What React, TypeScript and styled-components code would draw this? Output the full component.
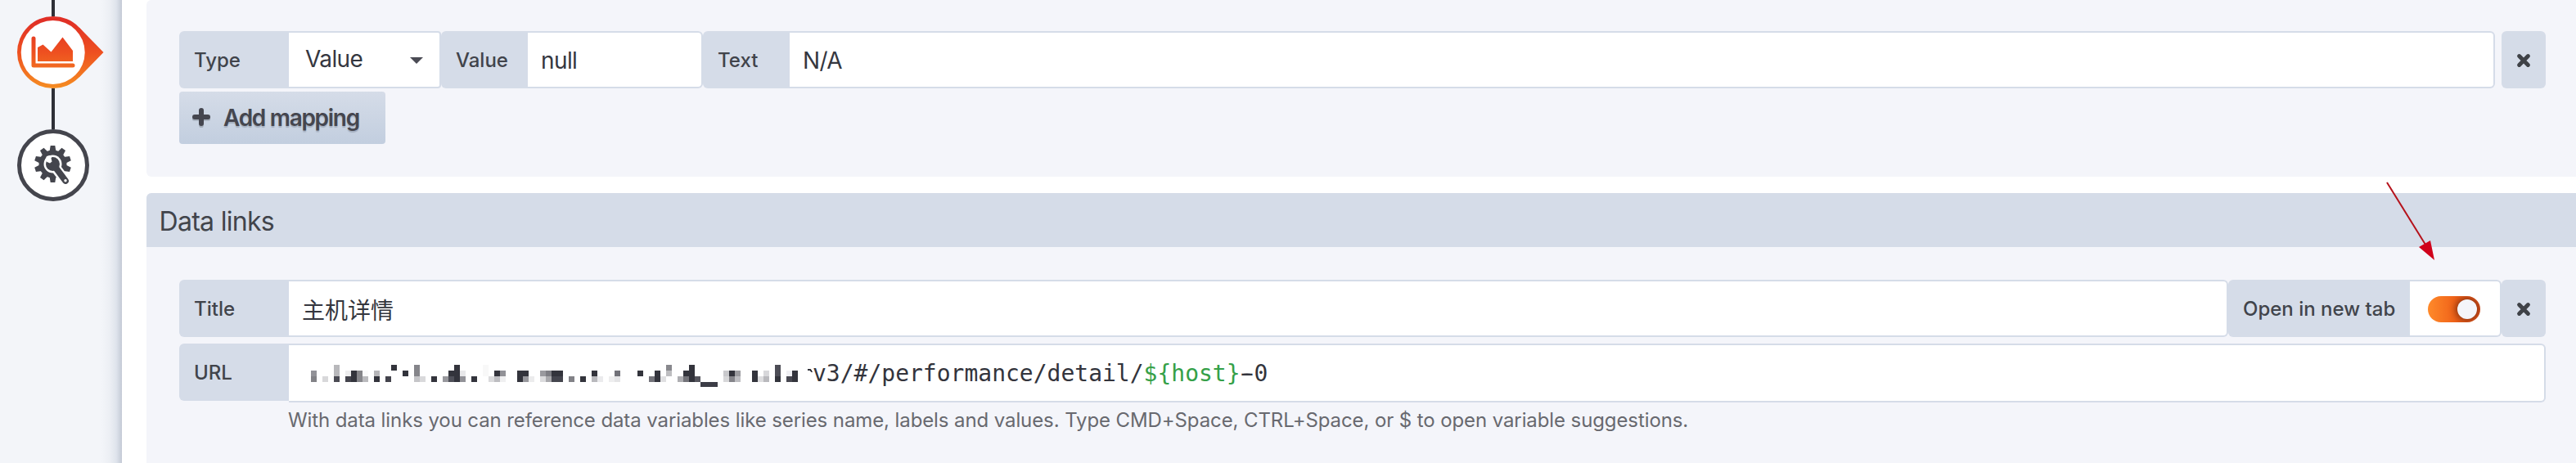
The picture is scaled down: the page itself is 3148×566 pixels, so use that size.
import React from 'react';
import styled, { createGlobalStyle } from 'styled-components';

const GlobalStyle = createGlobalStyle`
  * { box-sizing: border-box; }
  body {
    margin: 0;
    overflow: hidden;
    background: #fff;
    color: #35373f;
    font-family: Inter, "Noto Sans CJK SC", sans-serif;
    font-size: 28px;
    letter-spacing: -0.6px;
  }
`;

const Page = styled.div`
  display: flex;
  width: 3148px;
  height: 566px;
  overflow: hidden;
  position: relative;
`;

const Sidebar = styled.aside`
  flex: 0 0 149px;
  display: flex;
  flex-direction: column;
  padding-left: 21px;
  background: linear-gradient(90deg, #f3f5f9 0, #f3f5f9 124px, #eceff4 134px, #dfe4ec 142px, #c4cad6 149px);
`;

const Connector = styled.div<{ $height: number }>`
  width: 4px;
  height: ${(p) => p.$height}px;
  margin-left: 42px;
  background: #2f3037;
`;

const StepIcon = styled.svg`
  display: block;
  flex: none;
  width: 108px;
  height: 88px;
`;

const Main = styled.main`
  flex: 1;
  display: flex;
  flex-direction: column;
  gap: 20px;
  padding-left: 30px;
`;

const Panel = styled.section<{ $height: number }>`
  height: ${(p) => p.$height}px;
  flex: none;
  background: #f4f5fa;
  border-radius: 6px 0 0 6px;
  overflow: hidden;
`;

const PanelTitle = styled.h2`
  margin: 0;
  height: 66px;
  padding-left: 15.500px;
  background: #d5dce8;
  color: #41444b;
  font-size: 32px;
  font-weight: 400;
  line-height: 69px;
  letter-spacing: -0.7px;
`;

const PanelBody = styled.div<{ $top: number }>`
  padding: ${(p) => p.$top}px 37px 0 40px;
`;

const Row = styled.div<{ $gap: number }>`
  display: flex;
  align-items: flex-start;
  margin-bottom: ${(p) => p.$gap}px;
`;

const Label = styled.label<{ $width: number }>`
  flex: none;
  width: ${(p) => p.$width}px;
  height: 70px;
  padding-left: 18px;
  border-radius: 6px 0 0 6px;
  background: #d5dce8;
  color: #41444b;
  font-size: 24px;
  font-weight: 500;
  line-height: 71px;
  letter-spacing: 0;
  white-space: nowrap;
`;

const Field = styled.div<{ $width?: number; $height?: number }>`
  flex: ${(p) => (p.$width ? `0 0 ${p.$width}px` : '1')};
  display: flex;
  align-items: center;
  height: ${(p) => p.$height ?? 70}px;
  padding: 1px 16px 0;
  border: 2px solid #d5dce8;
  border-left: 0;
  border-radius: 0 6px 6px 0;
  background: #fff;
  white-space: nowrap;
`;

const TitleField = styled(Field)`
  letter-spacing: 0;
`;

const SelectField = styled(Field)`
  justify-content: space-between;
  padding: 0 20px 2px;
  border-radius: 0 4px 4px 0;
`;

const ToggleField = styled(Field)`
  justify-content: center;
  padding: 2px 2px 0 0;
`;

const Caret = styled.span`
  border: 8px solid transparent;
  border-top-color: #4a4b54;
  border-bottom: 0;
  margin-top: 4px;
`;

const RemoveButton = styled.button<{ $gap?: number }>`
  flex: 0 0 54px;
  height: 70px;
  margin-left: ${(p) => p.$gap ?? 0}px;
  padding: 2px 0 0;
  border: 0;
  border-radius: 6px;
  background: #d5dce8;
  display: flex;
  align-items: center;
  justify-content: center;
`;

const AddButton = styled.button`
  display: flex;
  align-items: center;
  gap: 16px;
  width: 252px;
  height: 64px;
  padding: 0 0 0 16px;
  border: 0;
  border-radius: 4px;
  background: linear-gradient(#d5dce8, #c2cedf);
  color: #45464f;
  font: 600 28px Inter, sans-serif;
  letter-spacing: -1.3px;
  text-shadow: 0 2px 1px rgba(60, 70, 90, 0.25);
  white-space: nowrap;
`;

const Toggle = styled.span`
  display: flex;
  justify-content: flex-end;
  align-items: center;
  width: 64px;
  height: 32px;
  padding-right: 4px;
  border-radius: 16px;
  background: linear-gradient(90deg, #ff8a2a, #ef6018 55%, #e3541a);
  overflow: hidden;
`;

const Knob = styled.span`
  width: 24px;
  height: 24px;
  border-radius: 50%;
  background: #f4f5f9;
  box-shadow: 0 0 8px 2px rgba(60, 20, 10, 0.6);
`;

const UrlField = styled(Field)`
  padding: 0 0 0 27px;
  font-family: "DejaVu Sans Mono", monospace;
  font-size: 28px;
  letter-spacing: 0;
  color: #33343c;
`;

const Mosaic = styled.svg`
  flex: none;
  width: 613px;
  height: 28px;
  margin-top: 8px;
`;

const Variable = styled.span`
  color: #35a048;
`;

const Dash = styled.span`
  text-shadow: 3px 0 currentColor, -3px 0 currentColor;
`;

const Hint = styled.p`
  margin: 0;
  padding-left: 133px;
  color: #68696f;
  font-size: 24px;
  line-height: 28px;
  letter-spacing: -0.1px;
  white-space: nowrap;
`;

const Arrow = styled.svg`
  position: absolute;
  left: 2914px;
  top: 220px;
  width: 64px;
  height: 102px;
`;

const CELL = 7;
const D = '#33343c';
/* [column, row, colour, width in cells] */
const cells: [number, number, string, number?][] = [
  [0, 1, '#929298'], [0, 2, '#828287'], [2, 2, '#d8d8da'],
  [4, 0, '#b8b8bb'], [4, 1, '#b8b8bb'], [4, 2, '#4b4b54'],
  [6, 1, '#ededee'], [7, 1, D], [8, 1, '#858589'], [9, 1, '#fafafa'],
  [6, 2, '#44444d'], [7, 2, D], [8, 2, '#86868b'], [9, 2, '#bababd'],
  [11, 1, '#b5b5b8'], [11, 2, D], [13, 2, '#43434c'], [14, 0, D], [16, 1, D],
  [18, 0, '#85858a'], [18, 1, '#85858a'], [18, 2, '#c5c5c8'], [19, 2, '#d9d9db'],
  [21, 2, D], [23, 2, '#98989d'], [24, 1, D], [24, 2, '#4f5059'],
  [25, 0, D], [25, 1, D], [25, 2, D], [26, 1, '#e8e8ea'], [26, 2, '#929298'],
  [28, 2, D], [30, 0, '#f8f8f8'], [30, 1, '#f8f8f8'], [31, 2, '#dadadc'],
  [32, 1, D], [32, 2, '#bdbdc1'], [33, 1, '#929297'], [33, 2, '#f0f0f1'],
  [36, 1, D, 2], [36, 2, D], [37, 2, '#98989d'], [38, 2, '#ececed'],
  [40, 1, '#99999e'], [41, 1, '#7e7e84'], [42, 1, D, 2],
  [40, 2, '#dbdbdd'], [41, 2, '#a8a8ac'], [42, 2, '#44454e', 2],
  [45, 2, '#828287'], [47, 2, D], [49, 1, D], [49, 2, '#b9b9bd'], [50, 2, '#ebebed'],
  [52, 2, '#eeeeef'], [53, 1, '#717178'], [53, 2, '#e4e4e6'],
  [57, 1, D], [59, 2, '#73737a'], [60, 1, D], [60, 2, D], [61, 2, '#dfdfe1'],
  [62, 0, '#88888d'], [62, 1, '#bdbdc0'],
  [64, 2, '#aeaeb2'], [65, 1, D], [65, 2, '#737379'], [66, 0, D], [66, 1, D], [66, 2, D],
  [67, 2, '#56565e'], [68, 3, '#3c3d46', 3],
  [72, 1, '#c9c9cc'], [73, 1, D], [74, 1, '#9b9b9f'],
  [72, 2, '#d7d7d9'], [73, 2, '#85858a'], [74, 2, '#bebec2'],
  [77, 1, D], [77, 2, D], [78, 2, '#dddddf'], [79, 1, '#d7d7da'], [79, 2, '#b9b9bd'],
  [81, 0, '#4d4d56'], [81, 1, '#4d4d56'], [81, 2, D],
  [83, 1, '#f0f0f4'], [83, 2, '#484851'], [84, 1, D], [84, 2, D],
];

const CrossIcon = () => (
  <svg width="18" height="18" viewBox="0 0 18 18">
    <path d="M3.6 3.6 14.4 14.4M14.4 3.6 3.6 14.4" stroke="#3f4247" strokeWidth="5" strokeLinecap="round" />
  </svg>
);

const PlusIcon = () => (
  <svg width="22" height="24" viewBox="0 0 22 24">
    <path d="M11 4.5V21.5M2.5 13H19.5" stroke="#a4adba" strokeWidth="5.6" strokeLinecap="round" />
    <path d="M11 3V19M3 11H19" stroke="#45464f" strokeWidth="6" strokeLinecap="round" />
  </svg>
);

const VisualizationStep = () => (
  <StepIcon viewBox="0 0 108 88">
    <defs>
      <linearGradient id="warm" gradientUnits="userSpaceOnUse" x1="0" y1="0" x2="0" y2="88">
        <stop offset="0.05" stopColor="#e02f26" />
        <stop offset="0.5" stopColor="#ee5020" />
        <stop offset="1" stopColor="#f58d22" />
      </linearGradient>
    </defs>
    <path d="M75.500 13.300 105.500 44 75.500 74.700Z" fill="url(#warm)" />
    <circle cx="44" cy="44" r="44" fill="url(#warm)" />
    <circle cx="43.700" cy="44" r="39" fill="#fff" />
    <path d="M20 27V60H68" fill="none" stroke="url(#warm)" strokeWidth="5" strokeLinecap="round" strokeLinejoin="round" />
    <path d="M25 38 31.500 34.500 41.500 43.500 55.500 25.500 68 42V55H25Z" fill="url(#warm)" />
  </StepIcon>
);

const GeneralStep = () => (
  <StepIcon viewBox="0 0 108 88">
    <circle cx="44" cy="44" r="41.500" fill="#fff" stroke="#44454d" strokeWidth="5" />
    <g fill="#44454d" transform="translate(43.500 42.500)">
      {Array.from({ length: 10 }, (_, i) => (
        <path key={i} d="M-4-15-2.800-22.500H2.800L4-15Z" transform={`rotate(${i * 36})`} />
      ))}
      <circle r="17" />
      <circle r="11" fill="#fff" />
      <path d="M0 0 16.500 22" stroke="#fff" strokeWidth="12.500" strokeLinecap="round" />
      <path d="M1 1 15.500 20.500" stroke="#44454d" strokeWidth="7.800" strokeLinecap="round" />
      <circle r="8.500" />
      <path d="M-7.500-9.500-4-10.500-1-8.800-2-7 -1-3-3.500-1-7-2.500-9.500-5Z" fill="#fff" />
      <circle cx="15.500" cy="20.200" r="1.700" fill="#fff" />
    </g>
  </StepIcon>
);

export default function App() {
  return (
    <Page>
      <GlobalStyle />
      <Sidebar>
        <Connector $height={20} />
        <VisualizationStep />
        <Connector $height={50} />
        <GeneralStep />
      </Sidebar>
      <Main>
        <Panel $height={216}>
          <PanelBody $top={38}>
            <Row $gap={4}>
              <Label $width={134}>Type</Label>
              <SelectField $width={186}>
                Value
                <Caret />
              </SelectField>
              <Label $width={106}>Value</Label>
              <Field $width={214}>null</Field>
              <Label $width={106}>Text</Label>
              <Field>N/A</Field>
              <RemoveButton $gap={8}><CrossIcon /></RemoveButton>
            </Row>
            <AddButton>
              <PlusIcon />
              Add mapping
            </AddButton>
          </PanelBody>
        </Panel>
        <Panel $height={360}>
          <PanelTitle>Data links</PanelTitle>
          <PanelBody $top={40}>
            <Row $gap={8}>
              <Label $width={134}>Title</Label>
              <TitleField>主机详情</TitleField>
              <Label $width={222}>Open in new tab</Label>
              <ToggleField $width={112}>
                <Toggle><Knob /></Toggle>
              </ToggleField>
              <RemoveButton><CrossIcon /></RemoveButton>
            </Row>
            <Row $gap={8}>
              <Label $width={134}>URL</Label>
              <UrlField $height={72}>
                <Mosaic viewBox="0 0 613 28" shapeRendering="crispEdges">
                  {cells.map(([col, row, fill, span = 1], i) => (
                    <rect key={i} x={col * CELL} y={row * CELL} width={span * CELL} height={row === 3 ? 6 : CELL} fill={fill} />
                  ))}
                  <path d="M607 5H611L613 9H611L609 7H607Z" fill={D} />
                </Mosaic>
                <span>v3/#/performance/detail/<Variable>{'${host}'}</Variable><Dash>-</Dash>0</span>
              </UrlField>
            </Row>
            <Hint>
              With data links you can reference data variables like series name, labels and values. Type CMD+Space, CTRL+Space, or $ to open variable suggestions.
            </Hint>
          </PanelBody>
        </Panel>
      </Main>
      <Arrow viewBox="0 0 64 102">
        <path d="M3 3 50 79" stroke="#b5121b" strokeWidth="2" />
        <path d="M61 98 42 82 56 74Z" fill="#d0021b" />
      </Arrow>
    </Page>
  );
}
